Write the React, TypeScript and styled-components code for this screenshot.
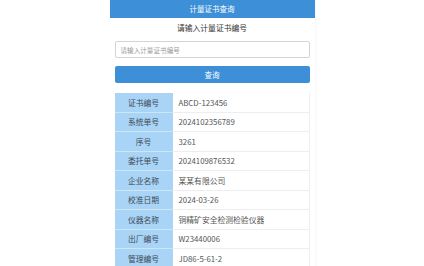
import React from "react";
import styled, { createGlobalStyle } from "styled-components";

const Global = createGlobalStyle`
  html, body { margin: 0; padding: 0; background: #fff; }
  body { font-family: "Noto Sans CJK SC", "Noto Sans", sans-serif; }
`;

const Page = styled.div`
  width: 205px;
  margin: 0 auto;
  background: #fff;
  box-shadow: 1px 0 2px rgba(0, 0, 0, 0.04);
`;

const Header = styled.div`
  height: 18px;
  line-height: 18px;
  background: #3d8fd7;
  color: #fff;
  font-size: 7.5px;
  text-align: center;
`;

const Body = styled.div`
  padding: 0 5px;
  display: flex;
  flex-direction: column;
`;

const Subtitle = styled.div`
  height: 20px;
  line-height: 20px;
  font-size: 7.8px;
  color: #333;
  text-align: center;
`;

const Input = styled.input`
  box-sizing: border-box;
  margin-top: 3px;
  height: 17px;
  width: 100%;
  border: 1px solid #d4d4d4;
  border-radius: 2px;
  padding: 0 5px;
  font-family: inherit;
  font-size: 6.6px;
  outline: none;
  &::placeholder { color: #999; }
`;

const Button = styled.button`
  box-sizing: border-box;
  margin-top: 8px;
  height: 17px;
  width: 100%;
  border: none;
  border-radius: 2px;
  background: #3d8fd7;
  color: #fff;
  font-family: inherit;
  font-size: 7.5px;
  padding: 0;
`;

const Table = styled.div`
  margin-top: 10px;
  display: flex;
  flex-direction: column;
`;

const Row = styled.div`
  display: grid;
  grid-template-columns: 58px 1fr;
  height: 19.5px;
`;

const Label = styled.div`
  background: #a9d4f5;
  border-bottom: 1px solid #cbe5f9;
  color: #3a4a58;
  font-size: 7.8px;
  display: flex;
  align-items: center;
  justify-content: center;
`;

const Value = styled.div`
  border-bottom: 1px solid #eeeeee;
  border-right: 1px solid #eeeeee;
  color: #555;
  font-size: 7.8px;
  padding-left: 6px;
  display: flex;
  align-items: center;
`;

const rows: [string, string][] = [
  ["证书编号", "ABCD-123456"],
  ["系统单号", "2024102356789"],
  ["序号", "3261"],
  ["委托单号", "2024109876532"],
  ["企业名称", "某某有限公司"],
  ["校准日期", "2024-03-26"],
  ["仪器名称", "铜精矿安全检测检验仪器"],
  ["出厂编号", "W23440006"],
  ["管理编号", "JD86-5-61-2"],
];

export default function App() {
  return (
    <>
      <Global />
      <Page>
        <Header>计量证书查询</Header>
        <Body>
          <Subtitle>请输入计量证书编号</Subtitle>
          <Input placeholder="请输入计量证书编号" />
          <Button>查询</Button>
          <Table>
            {rows.map(([k, v]) => (
              <Row key={k}>
                <Label>{k}</Label>
                <Value>{v}</Value>
              </Row>
            ))}
          </Table>
        </Body>
      </Page>
    </>
  );
}
